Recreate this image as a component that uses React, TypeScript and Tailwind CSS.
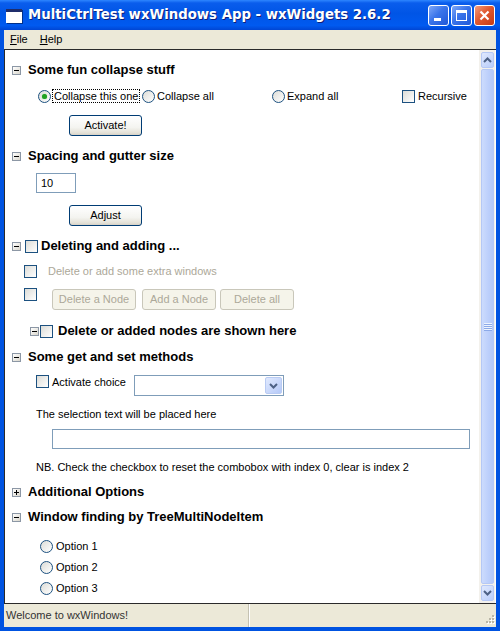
import React from "react";

const body = "font-['Liberation_Sans',Arial,sans-serif] text-[11px] text-black";
const head = "font-['Liberation_Sans',Arial,sans-serif] text-[13px] font-bold text-black";

function CollapseBox({ plus = false }: { plus?: boolean }) {
  return (
    <span className="relative w-[9px] h-[9px] shrink-0 border border-[#8C97A5] bg-[linear-gradient(135deg,#ffffff,#d9d6cc)] flex items-center justify-center">
      <span className="absolute w-[5px] h-px bg-black" />
      {plus && <span className="absolute w-px h-[5px] bg-black" />}
    </span>
  );
}

function Check() {
  return <span className="block w-[13px] h-[13px] shrink-0 border border-[#1C5180] bg-[linear-gradient(135deg,#dcdcd7,#ffffff)]" />;
}

function Radio({ on = false }: { on?: boolean }) {
  return (
    <span className="w-[13px] h-[13px] shrink-0 rounded-full border border-[#1C5180] bg-[linear-gradient(135deg,#dcdcd7,#ffffff)] flex items-center justify-center">
      {on && <span className="w-[5px] h-[5px] rounded-full bg-[#21A121] shadow-[0_0_1px_#5BD05B]" />}
    </span>
  );
}

function Button({ label, w, disabled = false }: { label: string; w: string; disabled?: boolean }) {
  return disabled ? (
    <div className={`${w} h-[21px] rounded-[3px] border border-[#C9C7BA] bg-[#F5F4EA] flex items-center justify-center text-[#ACA899]`}>
      {label}
    </div>
  ) : (
    <div className={`${w} h-[21px] rounded-[3px] border border-[#003C74] bg-[linear-gradient(180deg,#ffffff_0%,#f4f4f0_60%,#e3e0d6_90%,#d6d0c5_100%)] flex items-center justify-center`}>
      {label}
    </div>
  );
}

function Header({ label, plus = false, mt }: { label: string; plus?: boolean; mt: string }) {
  return (
    <div className={`${mt} h-[20px] pl-[7px] flex items-center gap-[7px]`}>
      <CollapseBox plus={plus} />
      <span className={head}>{label}</span>
    </div>
  );
}

function Chevron({ up = false }: { up?: boolean }) {
  return (
    <svg width="9" height="6" viewBox="0 0 9 6">
      <path d={up ? "M1 5 L4.5 1.5 L8 5" : "M1 1 L4.5 4.5 L8 1"} fill="none" stroke="#4D6185" strokeWidth="2" />
    </svg>
  );
}

function TitleButton({ kind }: { kind: "min" | "max" | "close" }) {
  const bg =
    kind === "close"
      ? "bg-[linear-gradient(135deg,#F39C7C_0%,#E0582F_45%,#C63A14_100%)]"
      : "bg-[linear-gradient(135deg,#7FA8F8_0%,#3A74EA_45%,#2058D8_100%)]";
  return (
    <div className={`w-[21px] h-[21px] rounded-[3px] border border-white ${bg} relative flex items-center justify-center`}>
      {kind === "min" && <span className="absolute left-[5px] top-[12px] w-[7px] h-[3px] bg-white" />}
      {kind === "max" && <span className="w-[11px] h-[11px] border border-white border-t-[3px]" />}
      {kind === "close" && (
        <svg width="11" height="11" viewBox="0 0 11 11">
          <path d="M1.5 1.5 L9.5 9.5 M9.5 1.5 L1.5 9.5" stroke="white" strokeWidth="2.2" />
        </svg>
      )}
    </div>
  );
}

export default function App() {
  return (
    <div className="w-[500px] h-[631px] flex flex-col bg-[#0053E1]">
      {/* title bar */}
      <div className="h-[30px] shrink-0 flex items-center bg-[linear-gradient(180deg,#2E86FF_0%,#0A5DEC_10%,#0055E6_45%,#005AF0_85%,#0046D4_100%)]">
        <div className="ml-[6px] w-[16px] h-[14px] mt-[1px] bg-white border-t-[3px] border-[#1F2D6B] shadow-[1px_1px_0_#00308A]" />
        <span className="ml-[6px] font-['DejaVu_Sans',sans-serif] text-[13.3px] font-bold text-white [text-shadow:1px_1px_0_#0F1F7A]">
          MultiCtrlTest wxWindows App - wxWidgets 2.6.2
        </span>
        <div className="ml-auto mr-[5px] flex gap-[2px]">
          <TitleButton kind="min" />
          <TitleButton kind="max" />
          <TitleButton kind="close" />
        </div>
      </div>

      <div className="flex-1 mx-[4px] mb-[4px] flex flex-col bg-[#ECE9D8] min-h-0">
        {/* menu */}
        <div className={`h-[19px] shrink-0 flex items-center ${body}`}>
          <span className="ml-[6px]">
            <span className="underline">F</span>ile
          </span>
          <span className="ml-[12px]">
            <span className="underline">H</span>elp
          </span>
        </div>

        {/* client area */}
        <div className="flex-1 flex border-t border-b border-l border-[#2A2A2A] min-h-0">
          <div className={`flex-1 bg-white flex flex-col pt-[10px] ${body}`}>
            <Header label="Some fun collapse stuff" mt="mt-0" />
            <div className="mt-[6px] h-[20px] pl-[33px] grid grid-cols-[104px_130px_130px_auto] items-center">
              <div className="flex items-center">
                <Radio on />
                <span className="ml-[1px] px-[1px] border border-dotted border-black leading-[12px]">Collapse this one</span>
              </div>
              <div className="flex items-center gap-[2px]">
                <Radio />
                <span>Collapse all</span>
              </div>
              <div className="flex items-center gap-[2px]">
                <Radio />
                <span>Expand all</span>
              </div>
              <div className="flex items-center gap-[3px]">
                <Check />
                <span>Recursive</span>
              </div>
            </div>
            <div className="mt-[9px] pl-[64px]">
              <Button label="Activate!" w="w-[73px]" />
            </div>

            <Header label="Spacing and gutter size" mt="mt-[10px]" />
            <div className="mt-[7px] pl-[31px]">
              <div className="w-[40px] h-[20px] border border-[#7F9DB9] flex items-center pl-[4px]">10</div>
            </div>
            <div className="mt-[12px] pl-[64px]">
              <Button label="Adjust" w="w-[73px]" />
            </div>

            <div className="mt-[10px] h-[20px] pl-[7px] flex items-center">
              <CollapseBox />
              <span className="ml-[4px]">
                <Check />
              </span>
              <span className={`ml-[3px] ${head}`}>Deleting and adding ...</span>
            </div>
            <div className="mt-[7px] h-[16px] pl-[19px] flex items-center">
              <Check />
              <span className="ml-[11px] text-[#ACA899]">Delete or add some extra windows</span>
            </div>
            <div className="mt-[9px] h-[22px] pl-[19px] flex items-start">
              <Check />
              <div className="ml-[15px] mt-[1px] flex">
                <Button label="Delete a Node" w="w-[84px]" disabled />
                <div className="ml-[6px]">
                  <Button label="Add a Node" w="w-[74px]" disabled />
                </div>
                <div className="ml-[4px]">
                  <Button label="Delete all" w="w-[74px]" disabled />
                </div>
              </div>
            </div>
            <div className="mt-[11px] h-[20px] pl-[25px] flex items-center">
              <CollapseBox />
              <span className="ml-[1px]">
                <Check />
              </span>
              <span className={`ml-[5px] ${head}`}>Delete or added nodes are shown here</span>
            </div>

            <Header label="Some get and set methods" mt="mt-[6px]" />
            <div className="mt-[8px] h-[21px] pl-[31px] flex items-start">
              <div className="w-[98px] flex items-start">
                <Check />
                <span className="ml-[3px] mt-[-1px]">Activate choice</span>
              </div>
              <div className="w-[150px] h-[21px] border border-[#7F9DB9] flex justify-end items-center pr-[1px]">
                <div className="w-[17px] h-[17px] rounded-[2px] border border-[#B9CBF3] bg-[linear-gradient(135deg,#E1EAFE,#B5C9F8)] flex items-center justify-center">
                  <Chevron />
                </div>
              </div>
            </div>
            <div className="mt-[9px] h-[18px] pl-[31px] flex items-center">The selection text will be placed here</div>
            <div className="mt-[6px] pl-[47px]">
              <div className="w-[418px] h-[20px] border border-[#7F9DB9]" />
            </div>
            <div className="mt-[9px] h-[18px] pl-[31px] flex items-center">
              NB. Check the checkbox to reset the combobox with index 0, clear is index 2
            </div>

            <Header label="Additional Options" plus mt="mt-[6px]" />
            <Header label="Window finding by TreeMultiNodeItem" mt="mt-[5px]" />
            {["Option 1", "Option 2", "Option 3"].map((o, i) => (
              <div key={o} className={`${i === 0 ? "mt-[11px]" : "mt-[5px]"} h-[16px] pl-[35px] flex items-center gap-[3px]`}>
                <Radio />
                <span>{o}</span>
              </div>
            ))}
          </div>

          {/* scrollbar */}
          <div className="w-[17px] flex flex-col bg-[#F3F1EC] border-r border-[#FDFDFB] py-[2px] pl-[2px] pr-[1px] gap-px">
            <div className="h-[16px] rounded-[2px] border border-[#B5C8F5] bg-[linear-gradient(135deg,#E0E9FE,#B9CDFA)] flex items-center justify-center">
              <Chevron up />
            </div>
            <div className="flex-1 rounded-[2px] border border-[#B5C8F5] bg-[linear-gradient(90deg,#CCDBFD,#BCCFFB_60%,#B3C8F8)] flex items-center justify-center">
              <div className="flex flex-col gap-px">
                {[0, 1, 2, 3].map((k) => (
                  <span key={k} className="block w-[8px] h-px bg-[#EEF4FE] shadow-[0_1px_0_#8CA9E8]" />
                ))}
              </div>
            </div>
            <div className="h-[16px] rounded-[2px] border border-[#B5C8F5] bg-[linear-gradient(135deg,#E0E9FE,#B9CDFA)] flex items-center justify-center">
              <Chevron />
            </div>
          </div>
        </div>

        {/* status bar */}
        <div className={`h-[23px] shrink-0 flex items-center ${body}`}>
          <div className="w-[245px] h-full flex items-center pl-[2px] border-r border-[#C5C2B2]">
            <span className="text-[#333]">Welcome to wxWindows!</span>
          </div>
          <div className="flex-1 h-full border-l border-white relative">
            <svg className="absolute right-[1px] bottom-[1px]" width="12" height="12" viewBox="0 0 12 12">
              {[
                [9, 1],
                [6, 4],
                [9, 4],
                [3, 7],
                [6, 7],
                [9, 7],
              ].map(([x, y], k) => (
                <g key={k}>
                  <rect x={x + 1} y={y + 1} width="2" height="2" fill="#FFFFFF" />
                  <rect x={x} y={y} width="2" height="2" fill="#B9B6A6" />
                </g>
              ))}
            </svg>
          </div>
        </div>
      </div>
    </div>
  );
}
